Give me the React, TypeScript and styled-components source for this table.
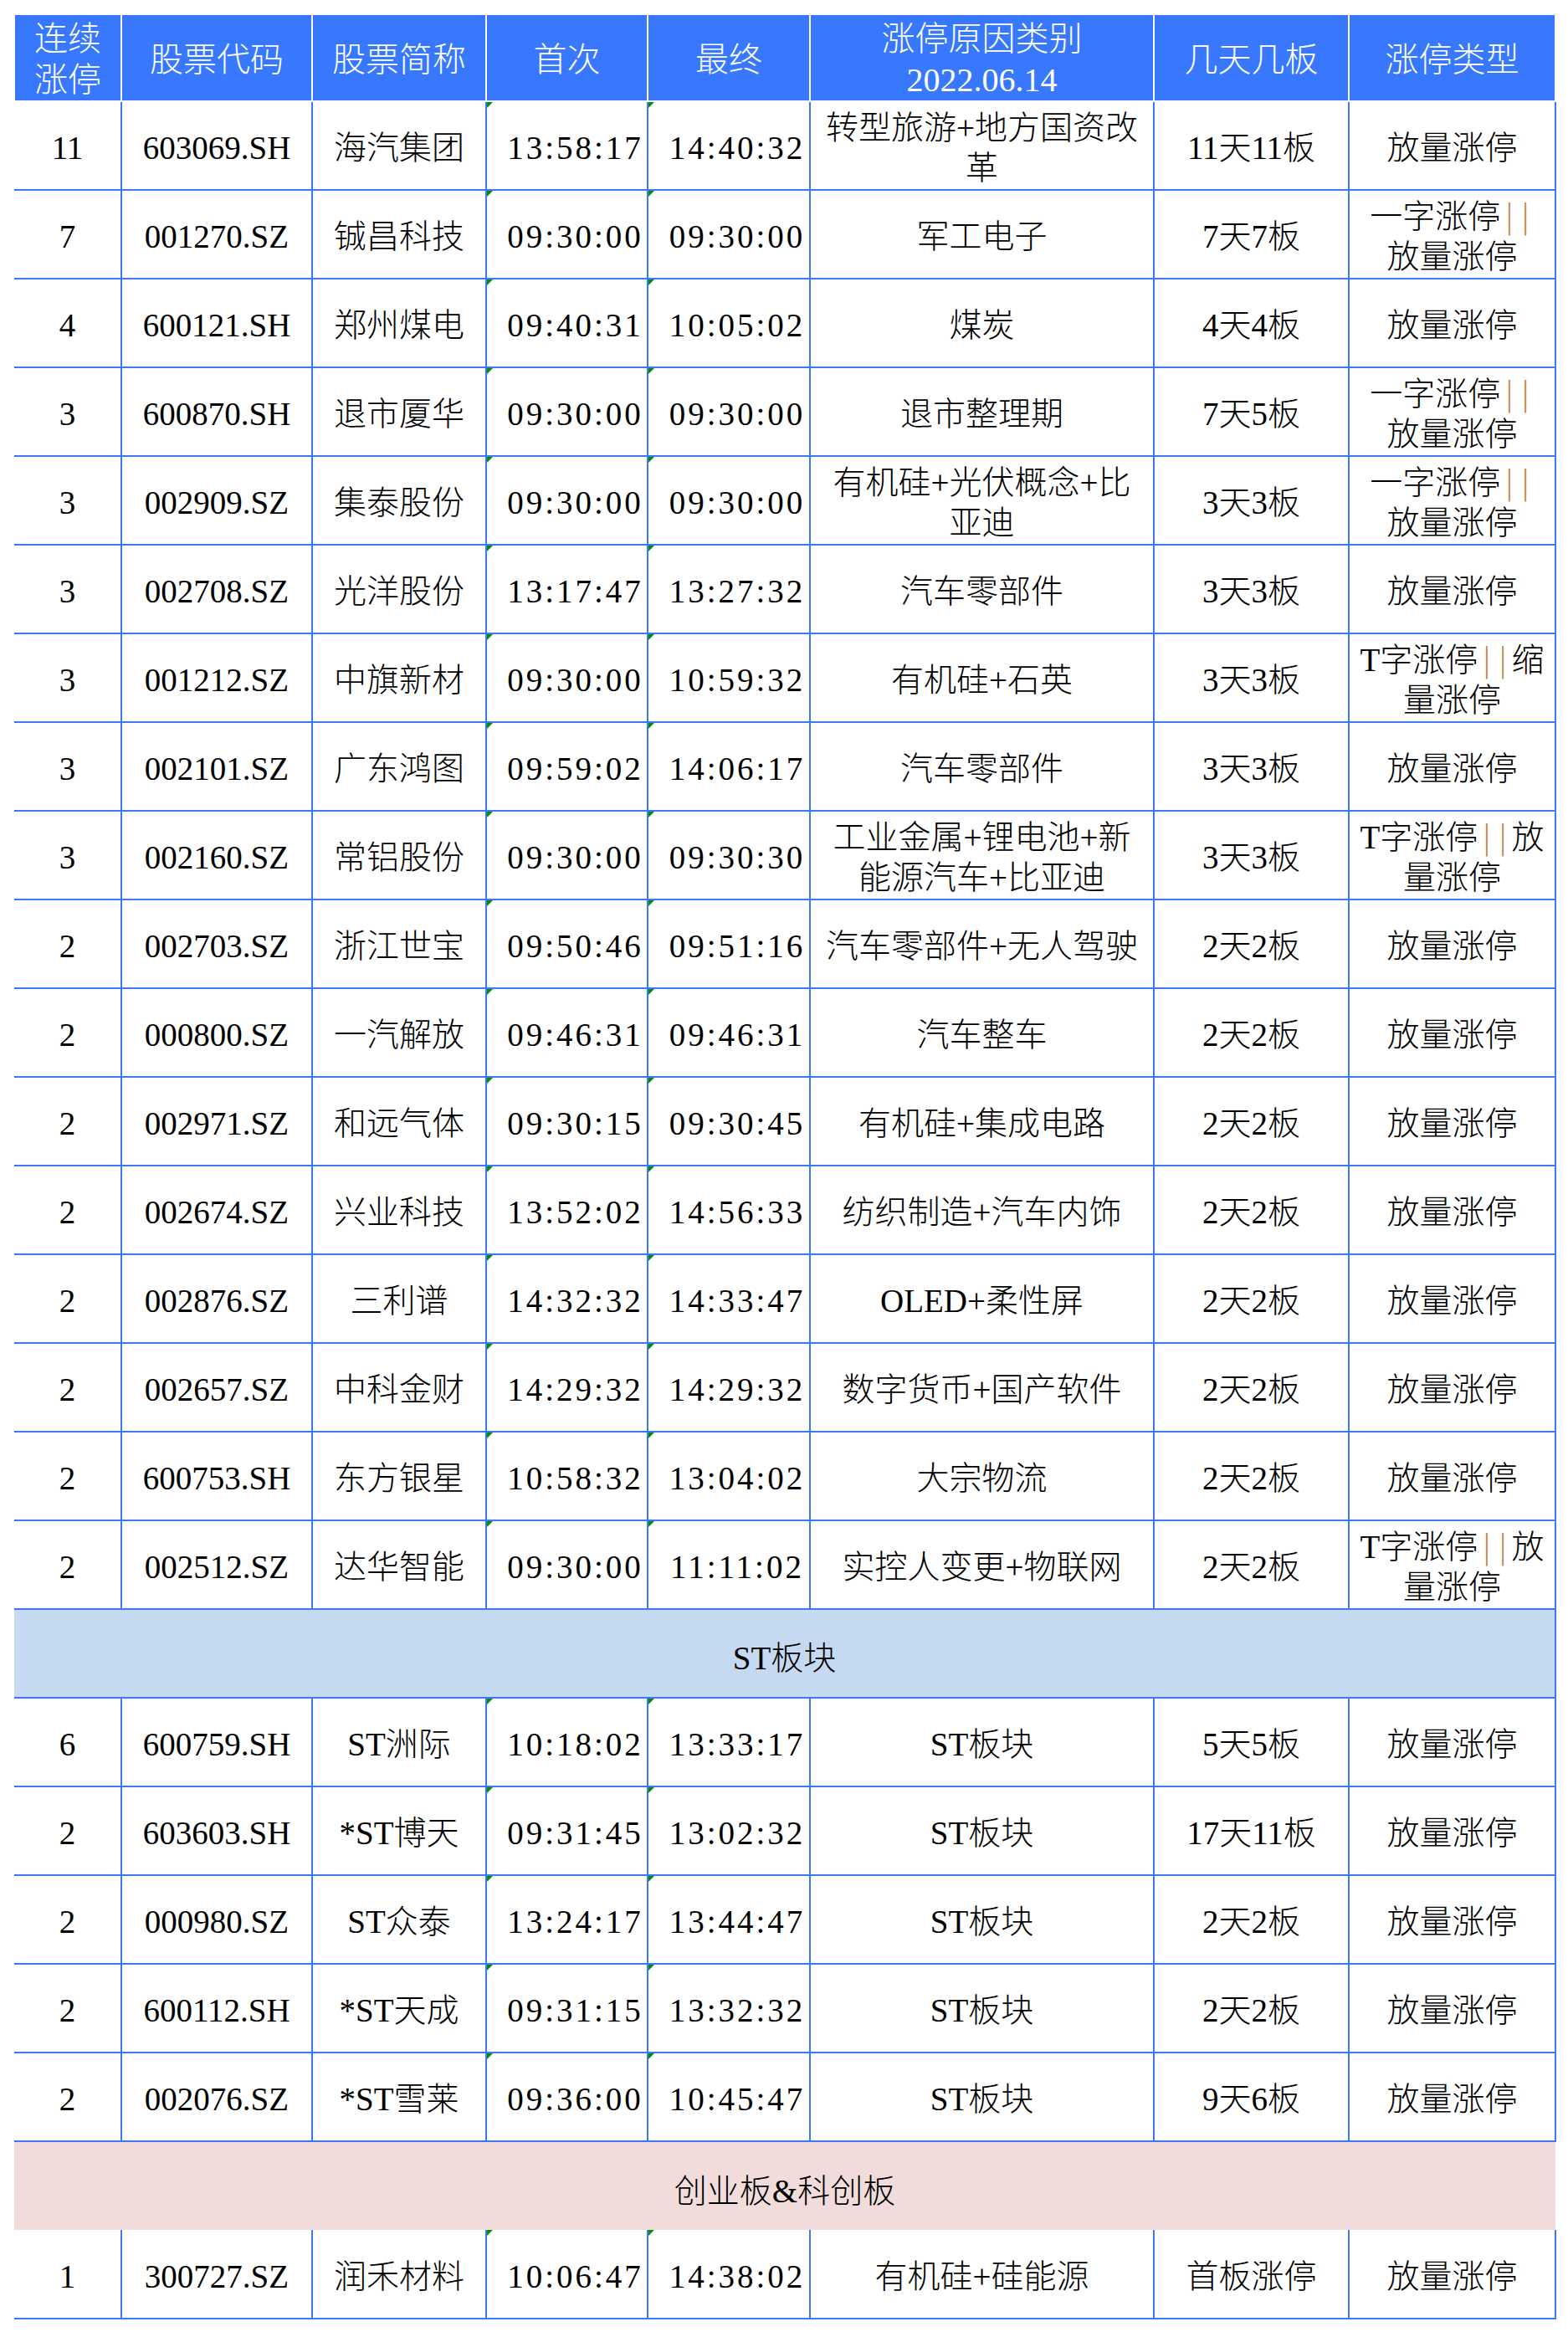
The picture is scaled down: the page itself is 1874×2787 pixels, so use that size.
import * as React from 'react';
import styled, { createGlobalStyle } from 'styled-components';

const BLUE = '#3c7af4';
const HEAD_BLUE = '#3778ff';

const GlobalStyle = createGlobalStyle`
    body {
        margin: 0;
        background: #ffffff;
    }
`;

const Page = styled.div`
    padding: 16px;
`;

const Sheet = styled.table`
    border-collapse: collapse;
    table-layout: fixed;
    width: 1842px;
    font-family: "Liberation Serif", "Noto Sans CJK SC", serif;
    font-weight: 300;
    color: #000;
`;

const HeadRow = styled.tr`
    height: 104px;
`;

const HeadCell = styled.th`
    background: ${HEAD_BLUE};
    color: #ffffff;
    font-size: 40px;
    font-weight: 300;
    line-height: 49px;
    border: 2px solid #ffffff;
    padding: 4px 0 0;
    text-align: center;
    vertical-align: middle;
    white-space: nowrap;
`;

const BodyRow = styled.tr`
    height: 106px;
`;

const Cell = styled.td<{ $first?: boolean; $noTop?: boolean; $time?: boolean }>`
    position: relative;
    border: 2px solid ${BLUE};
    border-left: ${(p) => (p.$first ? 'none' : `2px solid ${BLUE}`)};
    border-top: ${(p) => (p.$noTop ? 'none' : `2px solid ${BLUE}`)};
    padding: 6px 0 0 ${(p) => (p.$time ? '20px' : '0')};
    font-size: 39px;
    line-height: 48px;
    letter-spacing: ${(p) => (p.$time ? '3px' : '0')};
    text-align: center;
    vertical-align: middle;
    white-space: nowrap;
`;

const SectionCell = styled.td<{ $tone: 'st' | 'gem' }>`
    background: ${(p) => (p.$tone === 'st' ? '#c5d9f1' : '#f2dcdb')};
    border-top: 2px solid ${BLUE};
    border-bottom: ${(p) => (p.$tone === 'st' ? `2px solid ${BLUE}` : 'none')};
    border-right: ${(p) => (p.$tone === 'st' ? `2px solid ${BLUE}` : 'none')};
    border-left: none;
    padding: 4px 0 0;
    font-size: 39px;
    text-align: center;
    vertical-align: middle;
`;

const Flag = styled.span`
    position: absolute;
    top: 0;
    left: 0;
    width: 0;
    height: 0;
    border-top: 7px solid #0a8a0a;
    border-right: 7px solid transparent;
`;

const Line = styled.div`
    white-space: nowrap;
`;

const Bars = styled.span`
    color: #c08a45;
    font-family: "DejaVu Sans", sans-serif;
    font-weight: 200;
    letter-spacing: 6px;
    margin-left: 4px;
    margin-right: -2px;
`;

type Row = [string, string, string, string, string, string[], string, string[]];

const FANG = ['放量涨停'];
const YIZI = ['一字涨停||', '放量涨停'];

const mainRows: Row[] = [
    ['11', '603069.SH', '海汽集团', '13:58:17', '14:40:32', ['转型旅游+地方国资改', '革'], '11天11板', FANG],
    ['7', '001270.SZ', '铖昌科技', '09:30:00', '09:30:00', ['军工电子'], '7天7板', YIZI],
    ['4', '600121.SH', '郑州煤电', '09:40:31', '10:05:02', ['煤炭'], '4天4板', FANG],
    ['3', '600870.SH', '退市厦华', '09:30:00', '09:30:00', ['退市整理期'], '7天5板', YIZI],
    ['3', '002909.SZ', '集泰股份', '09:30:00', '09:30:00', ['有机硅+光伏概念+比', '亚迪'], '3天3板', YIZI],
    ['3', '002708.SZ', '光洋股份', '13:17:47', '13:27:32', ['汽车零部件'], '3天3板', FANG],
    ['3', '001212.SZ', '中旗新材', '09:30:00', '10:59:32', ['有机硅+石英'], '3天3板', ['T字涨停||缩', '量涨停']],
    ['3', '002101.SZ', '广东鸿图', '09:59:02', '14:06:17', ['汽车零部件'], '3天3板', FANG],
    ['3', '002160.SZ', '常铝股份', '09:30:00', '09:30:30', ['工业金属+锂电池+新', '能源汽车+比亚迪'], '3天3板', ['T字涨停||放', '量涨停']],
    ['2', '002703.SZ', '浙江世宝', '09:50:46', '09:51:16', ['汽车零部件+无人驾驶'], '2天2板', FANG],
    ['2', '000800.SZ', '一汽解放', '09:46:31', '09:46:31', ['汽车整车'], '2天2板', FANG],
    ['2', '002971.SZ', '和远气体', '09:30:15', '09:30:45', ['有机硅+集成电路'], '2天2板', FANG],
    ['2', '002674.SZ', '兴业科技', '13:52:02', '14:56:33', ['纺织制造+汽车内饰'], '2天2板', FANG],
    ['2', '002876.SZ', '三利谱', '14:32:32', '14:33:47', ['OLED+柔性屏'], '2天2板', FANG],
    ['2', '002657.SZ', '中科金财', '14:29:32', '14:29:32', ['数字货币+国产软件'], '2天2板', FANG],
    ['2', '600753.SH', '东方银星', '10:58:32', '13:04:02', ['大宗物流'], '2天2板', FANG],
    ['2', '002512.SZ', '达华智能', '09:30:00', '11:11:02', ['实控人变更+物联网'], '2天2板', ['T字涨停||放', '量涨停']],
];

const stRows: Row[] = [
    ['6', '600759.SH', 'ST洲际', '10:18:02', '13:33:17', ['ST板块'], '5天5板', FANG],
    ['2', '603603.SH', '*ST博天', '09:31:45', '13:02:32', ['ST板块'], '17天11板', FANG],
    ['2', '000980.SZ', 'ST众泰', '13:24:17', '13:44:47', ['ST板块'], '2天2板', FANG],
    ['2', '600112.SH', '*ST天成', '09:31:15', '13:32:32', ['ST板块'], '2天2板', FANG],
    ['2', '002076.SZ', '*ST雪莱', '09:36:00', '10:45:47', ['ST板块'], '9天6板', FANG],
];

const gemRows: Row[] = [
    ['1', '300727.SZ', '润禾材料', '10:06:47', '14:38:02', ['有机硅+硅能源'], '首板涨停', FANG],
];

const widths = [128, 228, 208, 193, 194, 411, 233, 247];

const renderLine = (text: string) => {
    const parts = text.split('||');
    if (parts.length === 1) return text;
    return (
        <>
            {parts[0]}
            <Bars>||</Bars>
            {parts[1]}
        </>
    );
};

const Lines: React.FC<{ lines: string[] }> = ({ lines }) => (
    <>
        {lines.map((l, i) => (
            <Line key={i}>{renderLine(l)}</Line>
        ))}
    </>
);

const DataRow: React.FC<{ row: Row; noTop?: boolean }> = ({ row, noTop }) => {
    const [streak, code, name, first, last, reason, days, kind] = row;
    return (
        <BodyRow>
            <Cell $first $noTop={noTop}>{streak}</Cell>
            <Cell $noTop={noTop}>{code}</Cell>
            <Cell $noTop={noTop}>{name}</Cell>
            <Cell $noTop={noTop} $time>
                <Flag />
                {first}
            </Cell>
            <Cell $noTop={noTop} $time>
                <Flag />
                {last}
            </Cell>
            <Cell $noTop={noTop}>
                <Lines lines={reason} />
            </Cell>
            <Cell $noTop={noTop}>{days}</Cell>
            <Cell $noTop={noTop}>
                <Lines lines={kind} />
            </Cell>
        </BodyRow>
    );
};

const App: React.FC = () => {
    return (
        <Page>
            <GlobalStyle />
            <Sheet>
                <colgroup>
                    {widths.map((w, i) => (
                        <col key={i} style={{ width: w }} />
                    ))}
                </colgroup>
                <thead>
                    <HeadRow>
                        <HeadCell>连续<br />涨停</HeadCell>
                        <HeadCell>股票代码</HeadCell>
                        <HeadCell>股票简称</HeadCell>
                        <HeadCell>首次</HeadCell>
                        <HeadCell>最终</HeadCell>
                        <HeadCell>涨停原因类别<br />2022.06.14</HeadCell>
                        <HeadCell>几天几板</HeadCell>
                        <HeadCell>涨停类型</HeadCell>
                    </HeadRow>
                </thead>
                <tbody>
                    {mainRows.map((r, i) => (
                        <DataRow key={'m' + i} row={r} />
                    ))}
                    <BodyRow>
                        <SectionCell $tone="st" colSpan={8}>ST板块</SectionCell>
                    </BodyRow>
                    {stRows.map((r, i) => (
                        <DataRow key={'s' + i} row={r} />
                    ))}
                    <BodyRow>
                        <SectionCell $tone="gem" colSpan={8}>创业板&amp;科创板</SectionCell>
                    </BodyRow>
                    {gemRows.map((r, i) => (
                        <DataRow key={'g' + i} row={r} noTop />
                    ))}
                </tbody>
            </Sheet>
        </Page>
    );
};

export default App;
